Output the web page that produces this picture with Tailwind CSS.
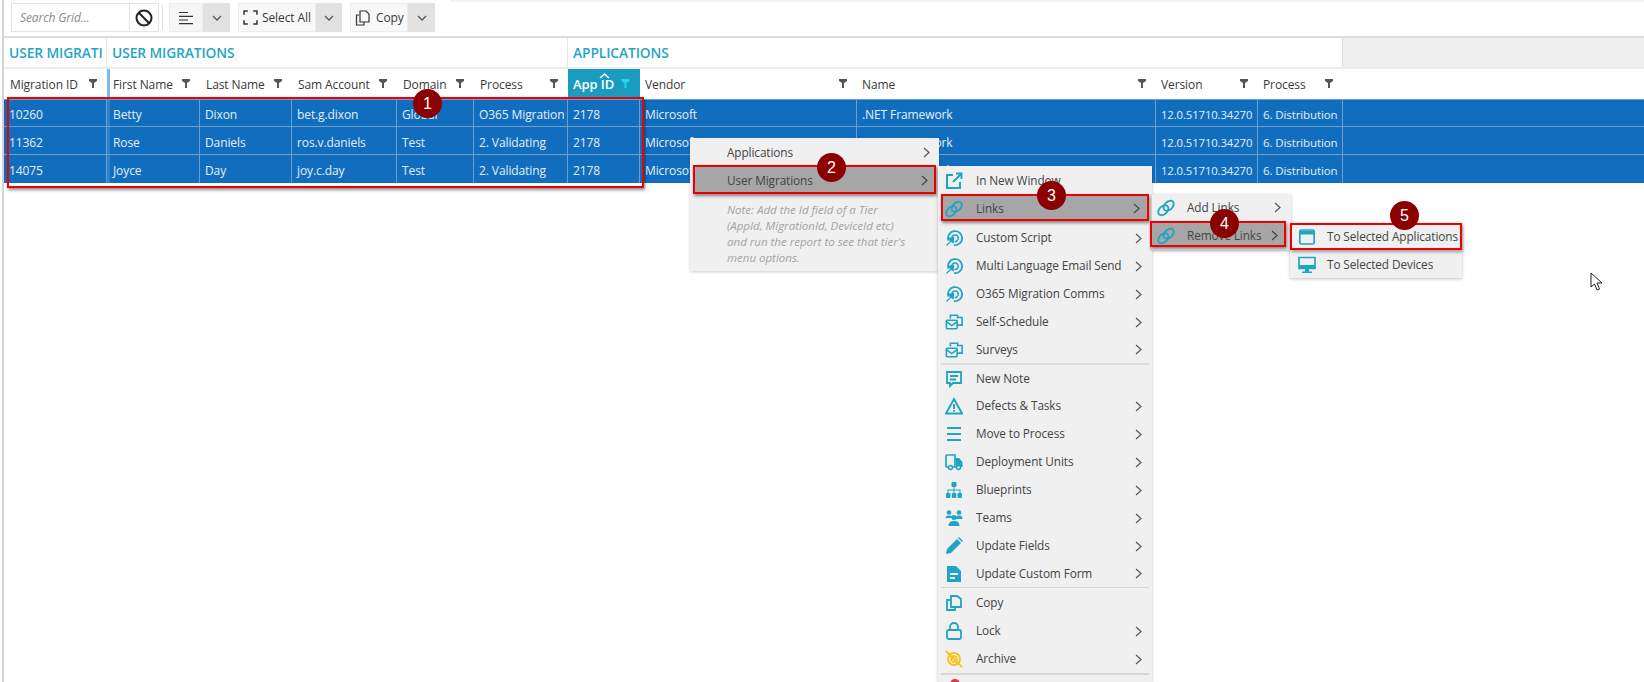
<!DOCTYPE html>
<html lang="en">
<head>
    <meta charset="UTF-8">
    <meta name="viewport" content="width=device-width, initial-scale=1.0">
    <title>Grid context menu</title>
    <script src="https://cdn.jsdelivr.net/npm/@tailwindcss/browser@4"></script>
</head>
<body class="bg-white h-[682px] overflow-hidden relative font-['Open_Sans','Liberation_Sans',sans-serif] text-[11.5px] tracking-[-0.1px] text-[#3a3a3a]">
    <!-- Icon sprites -->
    <svg class="hidden">
        <defs>
            <symbol id="i-link" viewBox="0 0 20 20">
                <ellipse cx="7" cy="12.5" rx="6.6" ry="4.4" transform="rotate(-45 7 12.5)" fill="none" stroke="currentColor" stroke-width="2"/>
                <ellipse cx="13" cy="7.5" rx="6.6" ry="4.4" transform="rotate(-45 13 7.5)" fill="none" stroke="currentColor" stroke-width="2"/>
            </symbol>
            <symbol id="i-script" viewBox="0 0 20 20">
                <path d="M4 13A7.8 7.8 0 1 1 10 17.8" fill="none" stroke="currentColor" stroke-width="2"/>
                <path d="M7.5 10.5A3.6 3.6 0 1 1 10.5 13.8" fill="none" stroke="currentColor" stroke-width="1.7"/>
                <path d="M1.5 18.5L7 13M9.5 9.5L9 15L3.5 10.5Z" fill="currentColor" stroke="currentColor" stroke-width="1.4"/>
            </symbol>
            <symbol id="i-mail" viewBox="0 0 20 20" fill="none" stroke="currentColor" stroke-width="1.8">
                <path d="M6 6V2.5H14V6M14 5H19V13.5H14"/>
                <rect x="1.5" y="8" width="12" height="9.5" rx="1"/>
                <path d="M1.5 9.5L7.5 14L13.5 9.5"/>
            </symbol>
        </defs>
    </svg>

    <div class="h-full ml-[2px] border-l-2 border-[#d4d4d4] flex flex-col">
        <!-- Toolbar -->
        <div class="h-[38px] border-b-2 border-[#dcdcdc] flex items-start pt-[3px] pl-[7px] relative">
            <div class="w-[119px] h-[29px] border border-[#e3e3e3] flex items-center pl-2 italic text-[#8a8a8a] text-[12px]">Search Grid...</div>
            <div class="w-[29px] h-[29px] border border-l-0 border-[#e3e3e3] flex items-center justify-center">
                <svg class="w-[18px] h-[18px]" viewBox="0 0 18 18" fill="none" stroke="#222" stroke-width="2"><circle cx="9" cy="9" r="7.5"/><path d="M3.8 3.8L14.2 14.2"/></svg>
            </div>
            <div class="w-px h-[25px] bg-[#e2e2e2] ml-[3px] mt-[2px]"></div>
            <div class="ml-[6px] flex h-[29px]">
                <div class="w-[34px] bg-[#f6f6f6] border border-[#ececec] flex items-center justify-center">
                    <svg class="w-[16px] h-[14px]" viewBox="0 0 16 14" stroke="#333" stroke-width="1.2"><path d="M1 1.5H10M1 5.3H15M1 9H10M1 12.7H15"/></svg>
                </div>
                <div class="w-[27px] bg-[#e2e2e2] flex items-center justify-center">
                    <svg class="w-[10px] h-[6px]" viewBox="0 0 10 6" fill="none" stroke="#555" stroke-width="1.3"><path d="M1 1L5 5L9 1"/></svg>
                </div>
            </div>
            <div class="ml-[8px] flex h-[29px]">
                <div class="w-[78px] bg-[#f8f8f8] border border-[#ececec] flex items-center pl-[4px] gap-[4px] text-[12px]">
                    <svg class="w-[15px] h-[15px]" viewBox="0 0 14 14" fill="none" stroke="#333" stroke-width="1.4"><path d="M1 4.5V1H4.5M9.5 1H13V4.5M1 9.5V13H4.5M9.5 13H13V9.5"/></svg>
                    <span>Select All</span>
                </div>
                <div class="w-[26px] bg-[#e2e2e2] flex items-center justify-center">
                    <svg class="w-[10px] h-[6px]" viewBox="0 0 10 6" fill="none" stroke="#555" stroke-width="1.3"><path d="M1 1L5 5L9 1"/></svg>
                </div>
            </div>
            <div class="ml-[8px] flex h-[29px]">
                <div class="w-[58px] bg-[#f8f8f8] border border-[#ececec] flex items-center pl-[4px] gap-[4px] text-[12px]">
                    <svg class="w-[17px] h-[16px]" viewBox="0 0 17 16" fill="none" stroke="#333" stroke-width="1.2"><path d="M4 5H1.5V15H9V12"/><path d="M5 1H11L14 4V12H5Z"/></svg>
                    <span>Copy</span>
                </div>
                <div class="w-[27px] bg-[#e2e2e2] flex items-center justify-center">
                    <svg class="w-[10px] h-[6px]" viewBox="0 0 10 6" fill="none" stroke="#555" stroke-width="1.3"><path d="M1 1L5 5L9 1"/></svg>
                </div>
            </div>
            <div class="absolute left-[446px] right-0 top-0 h-[2px] bg-[#f2f2f2]"></div>
        </div>

        <!-- Group headers -->
        <div class="grid grid-cols-[103px_461px_775px_1fr] h-[31px] border-b-2 border-[#ececec] text-[13.8px] font-semibold text-[#1fa5c6]">
            <div class="pl-[5px] pt-[5px] border-r border-[#e6e6e6] overflow-hidden whitespace-nowrap">USER MIGRATI</div>
            <div class="pl-[5px] pt-[5px] border-r border-[#e6e6e6]">USER MIGRATIONS</div>
            <div class="pl-[5px] pt-[5px] border-r border-[#dcdcdc]">APPLICATIONS</div>
            <div class="bg-[#efefef]"></div>
        </div>

        <!-- Column headers -->
        <div class="grid grid-cols-[103px_93px_92px_105px_77px_94px_72px_217px_299px_102px_85px_1fr] h-[30px] font-medium text-[12px]">
            <div class="pl-[6px] pt-[2px] flex items-center justify-between pr-[10px]">Migration ID <svg class="w-[8px] h-[9px] mb-[3px] fill-[#555]" viewBox="0 0 8 9"><path d="M0 0H8V2L5 4V9H3V4L0 2Z"/></svg></div>
            <div class="pt-[2px] flex items-center justify-between pr-[10px] border-l-[3px] border-[#7db9ec] pl-[3px]">First Name <svg class="w-[8px] h-[9px] mb-[3px] fill-[#555]" viewBox="0 0 8 9"><path d="M0 0H8V2L5 4V9H3V4L0 2Z"/></svg></div>
            <div class="pl-[6px] pt-[2px] flex items-center justify-between pr-[10px]">Last Name <svg class="w-[8px] h-[9px] mb-[3px] fill-[#555]" viewBox="0 0 8 9"><path d="M0 0H8V2L5 4V9H3V4L0 2Z"/></svg></div>
            <div class="pl-[6px] pt-[2px] flex items-center justify-between pr-[10px]">Sam Account <svg class="w-[8px] h-[9px] mb-[3px] fill-[#555]" viewBox="0 0 8 9"><path d="M0 0H8V2L5 4V9H3V4L0 2Z"/></svg></div>
            <div class="pl-[6px] pt-[2px] flex items-center justify-between pr-[10px]">Domain <svg class="w-[8px] h-[9px] mb-[3px] fill-[#555]" viewBox="0 0 8 9"><path d="M0 0H8V2L5 4V9H3V4L0 2Z"/></svg></div>
            <div class="pl-[6px] pt-[2px] flex items-center justify-between pr-[10px]">Process <svg class="w-[8px] h-[9px] mb-[3px] fill-[#555]" viewBox="0 0 8 9"><path d="M0 0H8V2L5 4V9H3V4L0 2Z"/></svg></div>
            <div class="pl-[5px] pt-[2px] flex items-center justify-between pr-[10px] bg-[#1a9cc0] text-white font-semibold text-[13px] relative">App ID
                <svg class="absolute left-[31px] top-[4px] w-[11px] h-[6px]" viewBox="0 0 11 6" fill="none" stroke="#fff" stroke-width="1.5"><path d="M1 5L5.5 1L10 5"/></svg>
                <svg class="w-[9px] h-[9px] mb-[3px] fill-[#25d4f2]" viewBox="0 0 8 9"><path d="M0 0H8V2L5 4V9H3V4L0 2Z"/></svg>
            </div>
            <div class="pl-[5px] pt-[2px] flex items-center justify-between pr-[10px]">Vendor <svg class="w-[8px] h-[9px] mb-[3px] fill-[#555]" viewBox="0 0 8 9"><path d="M0 0H8V2L5 4V9H3V4L0 2Z"/></svg></div>
            <div class="pl-[5px] pt-[2px] flex items-center justify-between pr-[10px]">Name <svg class="w-[8px] h-[9px] mb-[3px] fill-[#555]" viewBox="0 0 8 9"><path d="M0 0H8V2L5 4V9H3V4L0 2Z"/></svg></div>
            <div class="pl-[5px] pt-[2px] flex items-center justify-between pr-[10px]">Version <svg class="w-[8px] h-[9px] mb-[3px] fill-[#555]" viewBox="0 0 8 9"><path d="M0 0H8V2L5 4V9H3V4L0 2Z"/></svg></div>
            <div class="pl-[5px] pt-[2px] flex items-center justify-between pr-[10px]">Process <svg class="w-[8px] h-[9px] mb-[3px] fill-[#555]" viewBox="0 0 8 9"><path d="M0 0H8V2L5 4V9H3V4L0 2Z"/></svg></div>
            <div></div>
        </div>

        <!-- Selected rows -->
        <div class="bg-[#116ebe] text-[#e4eef8] text-[12px]">
            <div class="grid grid-cols-[103px_93px_92px_105px_77px_94px_72px_217px_299px_102px_85px_1fr] h-[28px] leading-[30px] border-y border-[#6e9fcb] *:border-r *:border-[#6e9fcb] *:pl-[5px] *:whitespace-nowrap *:overflow-hidden">
                <div>10260</div><div class="!pl-[3px] border-l-[3px] !border-l-[#2b82d0]">Betty</div><div>Dixon</div><div>bet.g.dixon</div><div>Global</div><div>O365 Migration</div><div>2178</div><div>Microsoft</div><div>.NET Framework</div><div class="text-[11.3px]">12.0.51710.34270</div><div class="text-[11.5px]">6. Distribution</div><div class="!border-r-0"></div>
            </div>
            <div class="grid grid-cols-[103px_93px_92px_105px_77px_94px_72px_217px_299px_102px_85px_1fr] h-[28px] leading-[31px] border-b border-[#6e9fcb] *:border-r *:border-[#6e9fcb] *:pl-[5px] *:whitespace-nowrap *:overflow-hidden">
                <div>11362</div><div class="!pl-[3px] border-l-[3px] !border-l-[#2b82d0]">Rose</div><div>Daniels</div><div>ros.v.daniels</div><div>Test</div><div>2. Validating</div><div>2178</div><div>Microsoft</div><div>.NET Framework</div><div class="text-[11.3px]">12.0.51710.34270</div><div class="text-[11.5px]">6. Distribution</div><div class="!border-r-0"></div>
            </div>
            <div class="grid grid-cols-[103px_93px_92px_105px_77px_94px_72px_217px_299px_102px_85px_1fr] h-[28px] leading-[32px] *:border-r *:border-[#6e9fcb] *:pl-[5px] *:whitespace-nowrap *:overflow-hidden">
                <div>14075</div><div class="!pl-[3px] border-l-[3px] !border-l-[#2b82d0]">Joyce</div><div>Day</div><div>joy.c.day</div><div>Test</div><div>2. Validating</div><div>2178</div><div>Microsoft</div><div>.NET Framework</div><div class="text-[11.3px]">12.0.51710.34270</div><div class="text-[11.5px]">6. Distribution</div><div class="!border-r-0"></div>
            </div>
        </div>
    </div>

    <!-- Row selection highlight -->
    <div class="absolute left-[7px] top-[97px] w-[637px] h-[91px] border-2 border-[#ee0000] shadow-[1px_2px_3px_rgba(0,0,0,0.45)]"></div>

    <!-- Tier menu -->
    <div class="absolute left-[690px] top-[138px] w-[249px] h-[133px] bg-[#f0f0f0] shadow-[0_1px_3px_rgba(0,0,0,0.2)] text-[#444] text-[11.8px]">
        <div class="h-[27px] pt-[2px] flex items-center pl-[37px] pr-[9px] justify-between">Applications
            <svg class="w-[7px] h-[11px]" viewBox="0 0 7 11" fill="none" stroke="#555" stroke-width="1.2"><path d="M1 1L6 5.5L1 10"/></svg>
        </div>
        <div class="h-[29px] mx-[3px] pt-[2px] border-2 border-[#ee0000] bg-[#a6a6a6] flex items-center pl-[32px] pr-[6px] justify-between shadow-[1px_2px_3px_rgba(0,0,0,0.45)]">User Migrations
            <svg class="w-[7px] h-[11px]" viewBox="0 0 7 11" fill="none" stroke="#444" stroke-width="1.2"><path d="M1 1L6 5.5L1 10"/></svg>
        </div>
        <p class="pl-[37px] pt-[8px] text-[11.5px] tracking-normal leading-[16px] italic text-[#a3a3a3] whitespace-nowrap">Note: Add the Id field of a Tier<br>(AppId, MigrationId, DeviceId etc)<br>and run the report to see that tier's<br>menu options.</p>
    </div>

    <!-- Actions menu -->
    <div class="absolute left-[938px] top-[166px] w-[214px] h-[516px] bg-[#f0f0f0] shadow-[0_1px_3px_rgba(0,0,0,0.25)] text-[#444] text-[11.8px] whitespace-nowrap overflow-hidden">
        <div class="h-[28px] flex items-center pl-[38px] pt-[2px]">In New Window
            <svg class="absolute left-[7px] top-[6px] w-[18px] h-[18px] text-[#1ea5c6]" viewBox="0 0 18 18" fill="none" stroke="currentColor" stroke-width="2"><path d="M8 3H2V16H15V10"/><path d="M11 1.5H16.5V7M16.5 1.5L8 10"/></svg>
        </div>
        <div class="h-[27px] mx-[3px] border-2 border-[#ee0000] bg-[#a6a6a6] flex items-center pl-[33px] pr-[7px] pt-[2px] justify-between shadow-[1px_2px_3px_rgba(0,0,0,0.45)]">Links
            <svg class="absolute left-[7px] top-[34px] w-[18px] h-[18px] text-[#1ea5c6]"><use href="#i-link"/></svg>
            <svg class="w-[7px] h-[11px]" viewBox="0 0 7 11" fill="none" stroke="#444" stroke-width="1.2"><path d="M1 1L6 5.5L1 10"/></svg>
        </div>
        <div class="h-[31px] pt-[3px] flex items-center pl-[7px] pr-[10px] gap-[13px]"><svg class="w-[18px] h-[18px] shrink-0 text-[#1ea5c6]"><use href="#i-script"/></svg><span class="flex-1">Custom Script</span><svg class="w-[7px] h-[11px]" viewBox="0 0 7 11" fill="none" stroke="#555" stroke-width="1.2"><path d="M1 1L6 5.5L1 10"/></svg></div>
        <div class="h-[28px] flex items-center pl-[7px] pr-[10px] gap-[13px]"><svg class="w-[18px] h-[18px] shrink-0 text-[#1ea5c6]"><use href="#i-script"/></svg><span class="flex-1">Multi Language Email Send</span><svg class="w-[7px] h-[11px]" viewBox="0 0 7 11" fill="none" stroke="#555" stroke-width="1.2"><path d="M1 1L6 5.5L1 10"/></svg></div>
        <div class="h-[28px] flex items-center pl-[7px] pr-[10px] gap-[13px]"><svg class="w-[18px] h-[18px] shrink-0 text-[#1ea5c6]"><use href="#i-script"/></svg><span class="flex-1">O365 Migration Comms</span><svg class="w-[7px] h-[11px]" viewBox="0 0 7 11" fill="none" stroke="#555" stroke-width="1.2"><path d="M1 1L6 5.5L1 10"/></svg></div>
        <div class="h-[28px] flex items-center pl-[7px] pr-[10px] gap-[13px]"><svg class="w-[18px] h-[18px] shrink-0 text-[#1ea5c6]"><use href="#i-mail"/></svg><span class="flex-1">Self-Schedule</span><svg class="w-[7px] h-[11px]" viewBox="0 0 7 11" fill="none" stroke="#555" stroke-width="1.2"><path d="M1 1L6 5.5L1 10"/></svg></div>
        <div class="h-[27px] flex items-center pl-[7px] pr-[10px] gap-[13px]"><svg class="w-[18px] h-[18px] shrink-0 text-[#1ea5c6]"><use href="#i-mail"/></svg><span class="flex-1">Surveys</span><svg class="w-[7px] h-[11px]" viewBox="0 0 7 11" fill="none" stroke="#555" stroke-width="1.2"><path d="M1 1L6 5.5L1 10"/></svg></div>
        <div class="h-[2px] bg-[#dedede] mx-[3px]"></div>
        <div class="h-[27px] flex items-center pl-[7px] pr-[10px] gap-[13px]">
            <svg class="w-[18px] h-[18px] text-[#1ea5c6]" viewBox="0 0 18 18" fill="none" stroke="currentColor" stroke-width="1.8"><path d="M2 2H16V13H8L5 16V13H2Z"/><path d="M5 6H13M5 9.5H11"/></svg>
            <span class="flex-1">New Note</span>
        </div>
        <div class="h-[28px] flex items-center pl-[7px] pr-[10px] gap-[13px]">
            <svg class="w-[18px] h-[18px] text-[#1ea5c6]" viewBox="0 0 18 18" fill="none" stroke="currentColor" stroke-width="1.9"><path d="M9 2L17 16.5H1Z"/><path d="M9 7V12M9 13V14.5"/></svg>
            <span class="flex-1">Defects &amp; Tasks</span>
            <svg class="w-[7px] h-[11px]" viewBox="0 0 7 11" fill="none" stroke="#555" stroke-width="1.2"><path d="M1 1L6 5.5L1 10"/></svg>
        </div>
        <div class="h-[28px] flex items-center pl-[7px] pr-[10px] gap-[13px]">
            <svg class="w-[18px] h-[18px] text-[#1ea5c6]" viewBox="0 0 18 18" stroke="currentColor" stroke-width="1.8"><path d="M2 3H16M2 9H16M2 15H16"/></svg>
            <span class="flex-1">Move to Process</span>
            <svg class="w-[7px] h-[11px]" viewBox="0 0 7 11" fill="none" stroke="#555" stroke-width="1.2"><path d="M1 1L6 5.5L1 10"/></svg>
        </div>
        <div class="h-[28px] flex items-center pl-[7px] pr-[10px] gap-[13px]">
            <svg class="w-[18px] h-[18px] text-[#1ea5c6]" viewBox="0 0 18 18"><path d="M4 14H2A1 1 0 0 1 1 13V3A1 1 0 0 1 2 2H10V14H8" fill="none" stroke="currentColor" stroke-width="1.7"/><path d="M11 5H14L17.5 9V14H11Z" fill="currentColor"/><circle cx="5.5" cy="14.5" r="2" fill="none" stroke="currentColor" stroke-width="1.5"/><circle cx="13.5" cy="14.5" r="2" fill="#f0f0f0" stroke="currentColor" stroke-width="1.5"/></svg>
            <span class="flex-1">Deployment Units</span>
            <svg class="w-[7px] h-[11px]" viewBox="0 0 7 11" fill="none" stroke="#555" stroke-width="1.2"><path d="M1 1L6 5.5L1 10"/></svg>
        </div>
        <div class="h-[28px] flex items-center pl-[7px] pr-[10px] gap-[13px]">
            <svg class="w-[18px] h-[18px] text-[#1ea5c6]" viewBox="0 0 18 18" fill="currentColor"><rect x="6.5" y="1" width="5" height="5" rx="1"/><rect x="1" y="12" width="4.5" height="5" rx="1"/><rect x="6.8" y="12" width="4.5" height="5" rx="1"/><rect x="12.5" y="12" width="4.5" height="5" rx="1"/><path d="M8.5 6H9.5V8.5H15.5V12H14.5V9.5H9.5V12H8.5V9.5H3.5V12H2.5V8.5H8.5Z"/></svg>
            <span class="flex-1">Blueprints</span>
            <svg class="w-[7px] h-[11px]" viewBox="0 0 7 11" fill="none" stroke="#555" stroke-width="1.2"><path d="M1 1L6 5.5L1 10"/></svg>
        </div>
        <div class="h-[28px] flex items-center pl-[7px] pr-[10px] gap-[13px]">
            <svg class="w-[18px] h-[18px] text-[#1ea5c6]" viewBox="0 0 18 18" fill="currentColor"><circle cx="4" cy="3.5" r="2.3"/><circle cx="14" cy="3.5" r="2.3"/><path d="M0.5 10C0.5 7 2 6.5 4 6.5S7 7 7 8V9H1ZM11 8C11 7 12 6.5 14 6.5S17.5 7 17.5 10H11Z"/><circle cx="9" cy="8.5" r="2.5"/><path d="M3.5 17C3.5 13 6 12 9 12S14.5 13 14.5 17Z"/></svg>
            <span class="flex-1">Teams</span>
            <svg class="w-[7px] h-[11px]" viewBox="0 0 7 11" fill="none" stroke="#555" stroke-width="1.2"><path d="M1 1L6 5.5L1 10"/></svg>
        </div>
        <div class="h-[28px] flex items-center pl-[7px] pr-[10px] gap-[13px]">
            <svg class="w-[18px] h-[18px] text-[#1ea5c6]" viewBox="0 0 18 18"><path d="M1 17L2 12L12 2L16 6L6 16Z" fill="currentColor"/><path d="M13 1L14 0L18 4L17 5Z" fill="currentColor"/></svg>
            <span class="flex-1">Update Fields</span>
            <svg class="w-[7px] h-[11px]" viewBox="0 0 7 11" fill="none" stroke="#555" stroke-width="1.2"><path d="M1 1L6 5.5L1 10"/></svg>
        </div>
        <div class="h-[27px] flex items-center pl-[7px] pr-[10px] gap-[13px]">
            <svg class="w-[18px] h-[18px] text-[#1ea5c6]" viewBox="0 0 18 18"><path d="M2 1H11L16 6V17H2Z" fill="currentColor"/><path d="M5 8H13V10H5ZM5 12H10V14H5Z" fill="#f0f0f0"/></svg>
            <span class="flex-1">Update Custom Form</span>
            <svg class="w-[7px] h-[11px]" viewBox="0 0 7 11" fill="none" stroke="#555" stroke-width="1.2"><path d="M1 1L6 5.5L1 10"/></svg>
        </div>
        <div class="h-px bg-[#d6d6d6] mx-[3px]"></div>
        <div class="h-[28px] mt-px flex items-center pl-[7px] pr-[10px] gap-[13px]">
            <svg class="w-[18px] h-[18px] text-[#1ea5c6]" viewBox="0 0 18 18" fill="none" stroke="currentColor" stroke-width="1.8"><path d="M5 6H2V16H10V13"/><path d="M6 2H12L16 5V13H6Z"/></svg>
            <span class="flex-1">Copy</span>
        </div>
        <div class="h-[28px] flex items-center pl-[7px] pr-[10px] gap-[13px]">
            <svg class="w-[18px] h-[18px] text-[#1ea5c6]" viewBox="0 0 18 18" fill="none" stroke="currentColor" stroke-width="1.8"><rect x="2" y="8" width="14" height="9" rx="1.5"/><path d="M5 8V5A4 4 0 0 1 13 5V8"/></svg>
            <span class="flex-1">Lock</span>
            <svg class="w-[7px] h-[11px]" viewBox="0 0 7 11" fill="none" stroke="#555" stroke-width="1.2"><path d="M1 1L6 5.5L1 10"/></svg>
        </div>
        <div class="h-[28px] flex items-center pl-[7px] pr-[10px] gap-[13px]">
            <svg class="w-[18px] h-[18px] text-[#f6c21c]" viewBox="0 0 18 18" fill="none" stroke="currentColor" stroke-width="1.8"><circle cx="9" cy="9" r="6"/><circle cx="9" cy="9" r="2.8"/><path d="M1 1L17 17"/></svg>
            <span class="flex-1">Archive</span>
            <svg class="w-[7px] h-[11px]" viewBox="0 0 7 11" fill="none" stroke="#555" stroke-width="1.2"><path d="M1 1L6 5.5L1 10"/></svg>
        </div>
        <div class="h-[2px] bg-[#d6d6d6] mx-[3px]"></div>
        <div class="pl-[12px] pt-[4px]"><div class="w-[10px] h-[10px] rounded-full bg-[#e8323c]"></div></div>
    </div>

    <!-- Links submenu -->
    <div class="absolute left-[1152px] top-[194px] w-[139px] h-[56px] bg-[#f0f0f0] shadow-[0_1px_3px_rgba(0,0,0,0.25)] text-[#444] text-[11.8px] whitespace-nowrap">
        <div class="h-[27px] flex items-center pl-[5px] pr-[10px] gap-[12px]"><svg class="w-[18px] h-[18px] shrink-0 text-[#1ea5c6]"><use href="#i-link"/></svg><span class="flex-1">Add Links</span><svg class="w-[7px] h-[11px]" viewBox="0 0 7 11" fill="none" stroke="#555" stroke-width="1.2"><path d="M1 1L6 5.5L1 10"/></svg></div>
        <div class="relative -left-[2px] w-[136px] h-[26px] pt-[3px] border-2 border-[#ee0000] bg-[#a6a6a6] flex items-center pl-[5px] pr-[6px] gap-[12px] shadow-[1px_2px_3px_rgba(0,0,0,0.45)]"><svg class="w-[18px] h-[18px] shrink-0 text-[#1ea5c6]"><use href="#i-link"/></svg><span class="flex-1 min-w-0">Remove Links</span><svg class="w-[7px] h-[11px] shrink-0" viewBox="0 0 7 11" fill="none" stroke="#444" stroke-width="1.2"><path d="M1 1L6 5.5L1 10"/></svg></div>
    </div>

    <!-- Remove links submenu -->
    <div class="absolute left-[1290px] top-[223px] w-[172px] h-[55px] bg-[#f0f0f0] shadow-[0_1px_3px_rgba(0,0,0,0.25)] text-[#444] text-[11.8px] whitespace-nowrap">
        <div class="h-[27px] border-2 border-[#ee0000] flex items-center pl-[6px] gap-[11px] shadow-[1px_2px_3px_rgba(0,0,0,0.35)]">
            <svg class="w-[18px] h-[18px] shrink-0 text-[#1ea5c6]" viewBox="0 0 18 18"><rect x="1.8" y="2" width="14.4" height="14" rx="1.5" fill="none" stroke="currentColor" stroke-width="1.7"/><path d="M2 3H16V6.5H2Z" fill="currentColor"/></svg>
            <span>To Selected Applications</span>
        </div>
        <div class="h-[28px] pt-[2px] flex items-center pl-[8px] gap-[11px]">
            <svg class="w-[18px] h-[18px] shrink-0 text-[#1ea5c6]" viewBox="0 0 18 18"><path d="M1 1.5H17V12.5H1Z" fill="none" stroke="currentColor" stroke-width="1.7"/><path d="M1 9H17V13H1ZM7 13H11V15.5H14V17H4V15.5H7Z" fill="currentColor"/></svg>
            <span>To Selected Devices</span>
        </div>
    </div>

    <!-- Step badges -->
    <div class="absolute left-[413px] top-[89px] w-[29px] h-[29px] rounded-full bg-[#8b0000] text-white text-[16px] font-['Liberation_Sans',sans-serif] flex items-center justify-center">1</div>
    <div class="absolute left-[817px] top-[153px] w-[29px] h-[29px] rounded-full bg-[#8b0000] text-white text-[16px] font-['Liberation_Sans',sans-serif] flex items-center justify-center">2</div>
    <div class="absolute left-[1037px] top-[181px] w-[29px] h-[29px] rounded-full bg-[#8b0000] text-white text-[16px] font-['Liberation_Sans',sans-serif] flex items-center justify-center">3</div>
    <div class="absolute left-[1210px] top-[209px] w-[29px] h-[29px] rounded-full bg-[#8b0000] text-white text-[16px] font-['Liberation_Sans',sans-serif] flex items-center justify-center">4</div>
    <div class="absolute left-[1390px] top-[201px] w-[29px] h-[29px] rounded-full bg-[#8b0000] text-white text-[16px] font-['Liberation_Sans',sans-serif] flex items-center justify-center">5</div>

    <!-- Mouse cursor -->
    <svg class="absolute left-[1590px] top-[272px] w-[13px] h-[19px]" viewBox="0 0 13 19" fill="#fff" stroke="#222" stroke-width="1"><path d="M1 1V15L4.5 12L7 18L9.5 17L7 11H12Z"/></svg>
</body>
</html>
